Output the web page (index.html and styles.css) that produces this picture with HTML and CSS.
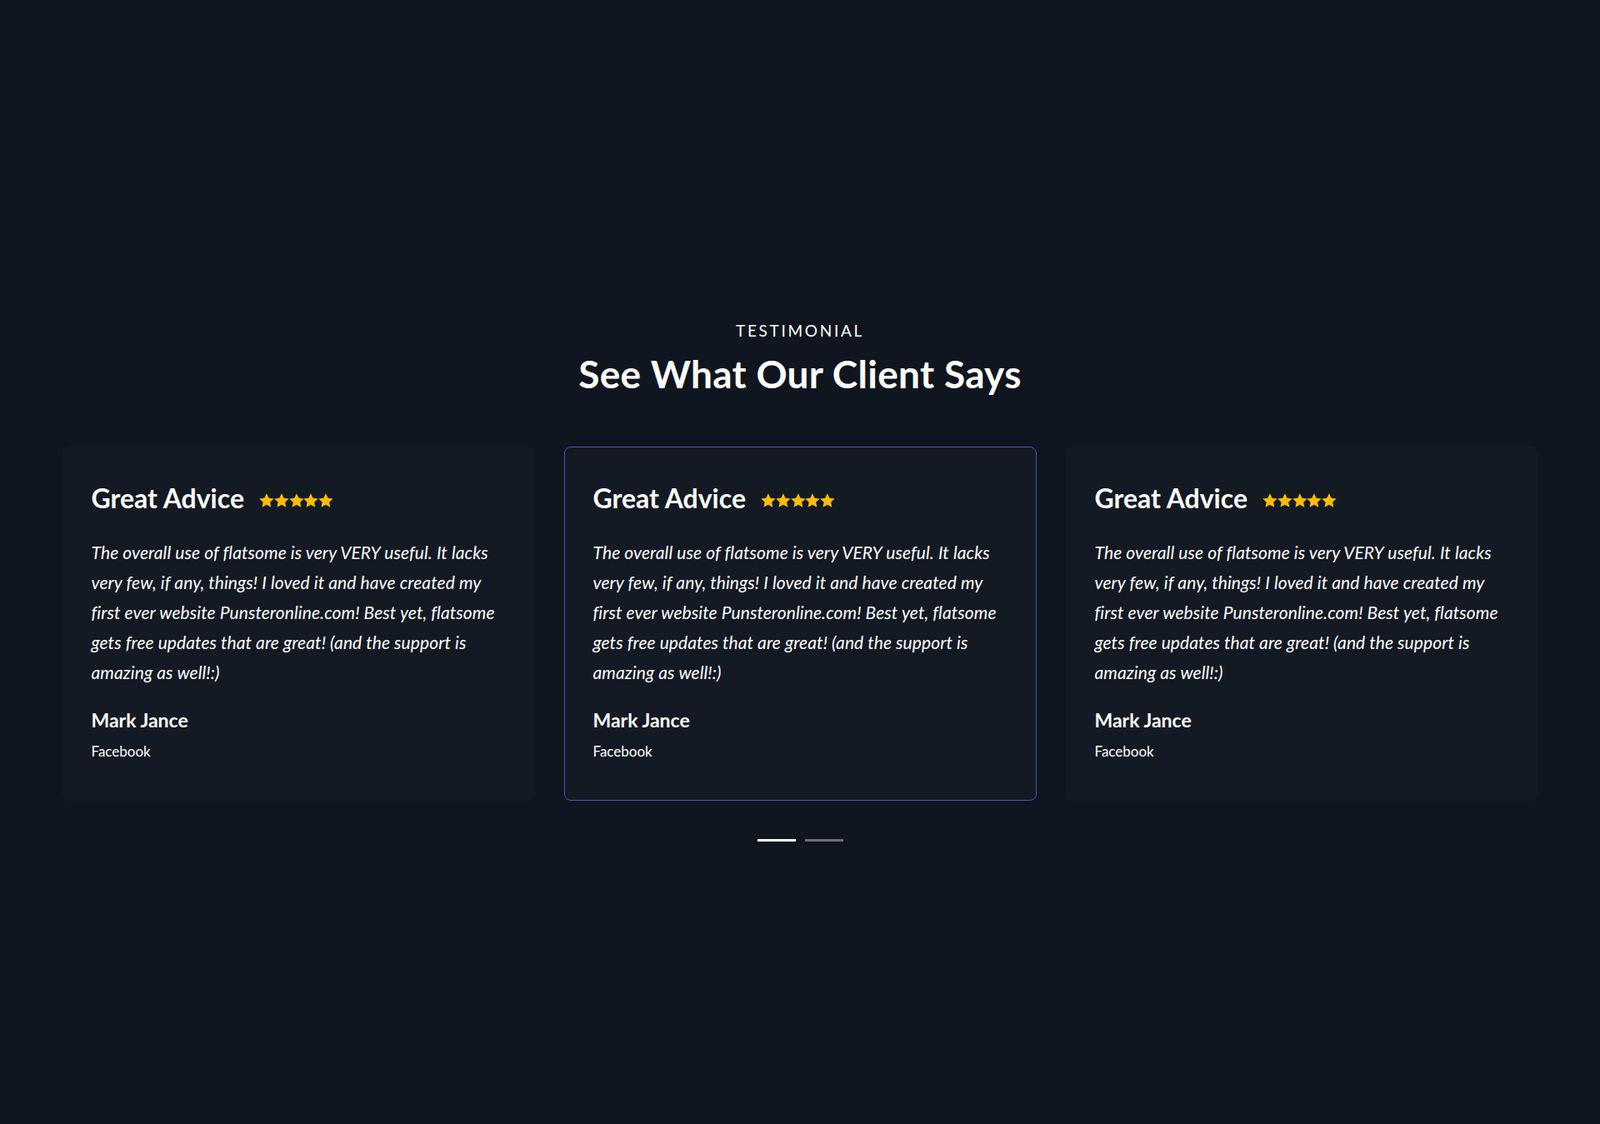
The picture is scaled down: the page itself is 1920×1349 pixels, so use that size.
FILE: index.html
```html
<!DOCTYPE html>
<html lang="en">
<head>
<meta charset="utf-8">
<title>Testimonial</title>
<link rel="stylesheet" href="styles.css">
</head>
<body>
<section class="testimonials">
  <p class="eyebrow">TESTIMONIAL</p>
  <h2 class="heading">See What Our Client Says</h2>
  <div class="cards">
    <article class="card">
      <div class="card-head">
        <h3 class="card-title">Great Advice</h3>
        <div class="stars">
          <svg viewBox="1.5 1.6 21 20"><path d="M12 1.8l3.1 6.6 7.2.9-5.3 5 1.4 7.1L12 17.9l-6.4 3.5L7 14.3l-5.3-5 7.2-.9z"/></svg>
          <svg viewBox="1.5 1.6 21 20"><path d="M12 1.8l3.1 6.6 7.2.9-5.3 5 1.4 7.1L12 17.9l-6.4 3.5L7 14.3l-5.3-5 7.2-.9z"/></svg>
          <svg viewBox="1.5 1.6 21 20"><path d="M12 1.8l3.1 6.6 7.2.9-5.3 5 1.4 7.1L12 17.9l-6.4 3.5L7 14.3l-5.3-5 7.2-.9z"/></svg>
          <svg viewBox="1.5 1.6 21 20"><path d="M12 1.8l3.1 6.6 7.2.9-5.3 5 1.4 7.1L12 17.9l-6.4 3.5L7 14.3l-5.3-5 7.2-.9z"/></svg>
          <svg viewBox="1.5 1.6 21 20"><path d="M12 1.8l3.1 6.6 7.2.9-5.3 5 1.4 7.1L12 17.9l-6.4 3.5L7 14.3l-5.3-5 7.2-.9z"/></svg>
        </div>
      </div>
      <p class="quote">The overall use of flatsome is very VERY useful. It lacks very few, if any, things! I loved it and have created my first ever website Punsteronline.com! Best yet, flatsome gets free updates that are great! (and the support is amazing as well!:)</p>
      <p class="name">Mark Jance</p>
      <p class="source">Facebook</p>
    </article>
    <article class="card card-active">
      <div class="card-head">
        <h3 class="card-title">Great Advice</h3>
        <div class="stars">
          <svg viewBox="1.5 1.6 21 20"><path d="M12 1.8l3.1 6.6 7.2.9-5.3 5 1.4 7.1L12 17.9l-6.4 3.5L7 14.3l-5.3-5 7.2-.9z"/></svg>
          <svg viewBox="1.5 1.6 21 20"><path d="M12 1.8l3.1 6.6 7.2.9-5.3 5 1.4 7.1L12 17.9l-6.4 3.5L7 14.3l-5.3-5 7.2-.9z"/></svg>
          <svg viewBox="1.5 1.6 21 20"><path d="M12 1.8l3.1 6.6 7.2.9-5.3 5 1.4 7.1L12 17.9l-6.4 3.5L7 14.3l-5.3-5 7.2-.9z"/></svg>
          <svg viewBox="1.5 1.6 21 20"><path d="M12 1.8l3.1 6.6 7.2.9-5.3 5 1.4 7.1L12 17.9l-6.4 3.5L7 14.3l-5.3-5 7.2-.9z"/></svg>
          <svg viewBox="1.5 1.6 21 20"><path d="M12 1.8l3.1 6.6 7.2.9-5.3 5 1.4 7.1L12 17.9l-6.4 3.5L7 14.3l-5.3-5 7.2-.9z"/></svg>
        </div>
      </div>
      <p class="quote">The overall use of flatsome is very VERY useful. It lacks very few, if any, things! I loved it and have created my first ever website Punsteronline.com! Best yet, flatsome gets free updates that are great! (and the support is amazing as well!:)</p>
      <p class="name">Mark Jance</p>
      <p class="source">Facebook</p>
    </article>
    <article class="card">
      <div class="card-head">
        <h3 class="card-title">Great Advice</h3>
        <div class="stars">
          <svg viewBox="1.5 1.6 21 20"><path d="M12 1.8l3.1 6.6 7.2.9-5.3 5 1.4 7.1L12 17.9l-6.4 3.5L7 14.3l-5.3-5 7.2-.9z"/></svg>
          <svg viewBox="1.5 1.6 21 20"><path d="M12 1.8l3.1 6.6 7.2.9-5.3 5 1.4 7.1L12 17.9l-6.4 3.5L7 14.3l-5.3-5 7.2-.9z"/></svg>
          <svg viewBox="1.5 1.6 21 20"><path d="M12 1.8l3.1 6.6 7.2.9-5.3 5 1.4 7.1L12 17.9l-6.4 3.5L7 14.3l-5.3-5 7.2-.9z"/></svg>
          <svg viewBox="1.5 1.6 21 20"><path d="M12 1.8l3.1 6.6 7.2.9-5.3 5 1.4 7.1L12 17.9l-6.4 3.5L7 14.3l-5.3-5 7.2-.9z"/></svg>
          <svg viewBox="1.5 1.6 21 20"><path d="M12 1.8l3.1 6.6 7.2.9-5.3 5 1.4 7.1L12 17.9l-6.4 3.5L7 14.3l-5.3-5 7.2-.9z"/></svg>
        </div>
      </div>
      <p class="quote">The overall use of flatsome is very VERY useful. It lacks very few, if any, things! I loved it and have created my first ever website Punsteronline.com! Best yet, flatsome gets free updates that are great! (and the support is amazing as well!:)</p>
      <p class="name">Mark Jance</p>
      <p class="source">Facebook</p>
    </article>
  </div>
  <div class="dots">
    <span class="dot dot-active"></span>
    <span class="dot"></span>
  </div>
</section>
</body>
</html>
```

FILE: styles.css
```css
* { box-sizing: border-box; }
html, body { margin: 0; padding: 0; }
body {
  background: #10161f;
  color: #ffffff;
  font-family: Lato, "Noto Sans", sans-serif;
  min-height: 1349px;
}
.testimonials {
  padding: 385px 0 0;
  display: flex;
  flex-direction: column;
  align-items: center;
}
.eyebrow {
  margin: 0;
  font-size: 19px;
  line-height: 24px;
  letter-spacing: 2.7px;
  font-weight: 400;
}
.heading {
  margin: 12px 0 0;
  font-size: 46px;
  line-height: 56px;
  letter-spacing: 0.3px;
  font-weight: 700;
}
.cards {
  margin-top: 59px;
  display: flex;
  justify-content: center;
  gap: 35px;
  width: 100%;
}
.card {
  flex: 0 0 567px;
  min-height: 425px;
  background: #141a24;
  border: 1px solid transparent;
  border-radius: 8px;
  padding: 43px 34px 40px;
}
.card-active {
  border-color: #4255c0;
}
.card-head {
  display: flex;
  align-items: center;
  gap: 18px;
}
.card-title {
  margin: 0;
  font-size: 32px;
  line-height: 36px;
  font-weight: 700;
}
.stars {
  display: flex;
  margin-top: 5px;
}
.stars svg {
  width: 17.8px;
  height: 17px;
  fill: #fbbc05;
}
.quote {
  margin: 29px 0 0;
  font-size: 21px;
  line-height: 36px;
  letter-spacing: 0.1px;
  font-style: italic;
  font-weight: 400;
}
.name {
  margin: 25px 0 0;
  font-size: 23px;
  line-height: 28px;
  font-weight: 700;
}
.source {
  margin: 13px 0 0;
  font-size: 17px;
  line-height: 22px;
  font-weight: 400;
}
.dots {
  margin-top: 46px;
  display: flex;
  gap: 11px;
}
.dot {
  width: 46px;
  height: 3px;
  background: #6b6f77;
}
.dot-active {
  background: #ffffff;
}
```
